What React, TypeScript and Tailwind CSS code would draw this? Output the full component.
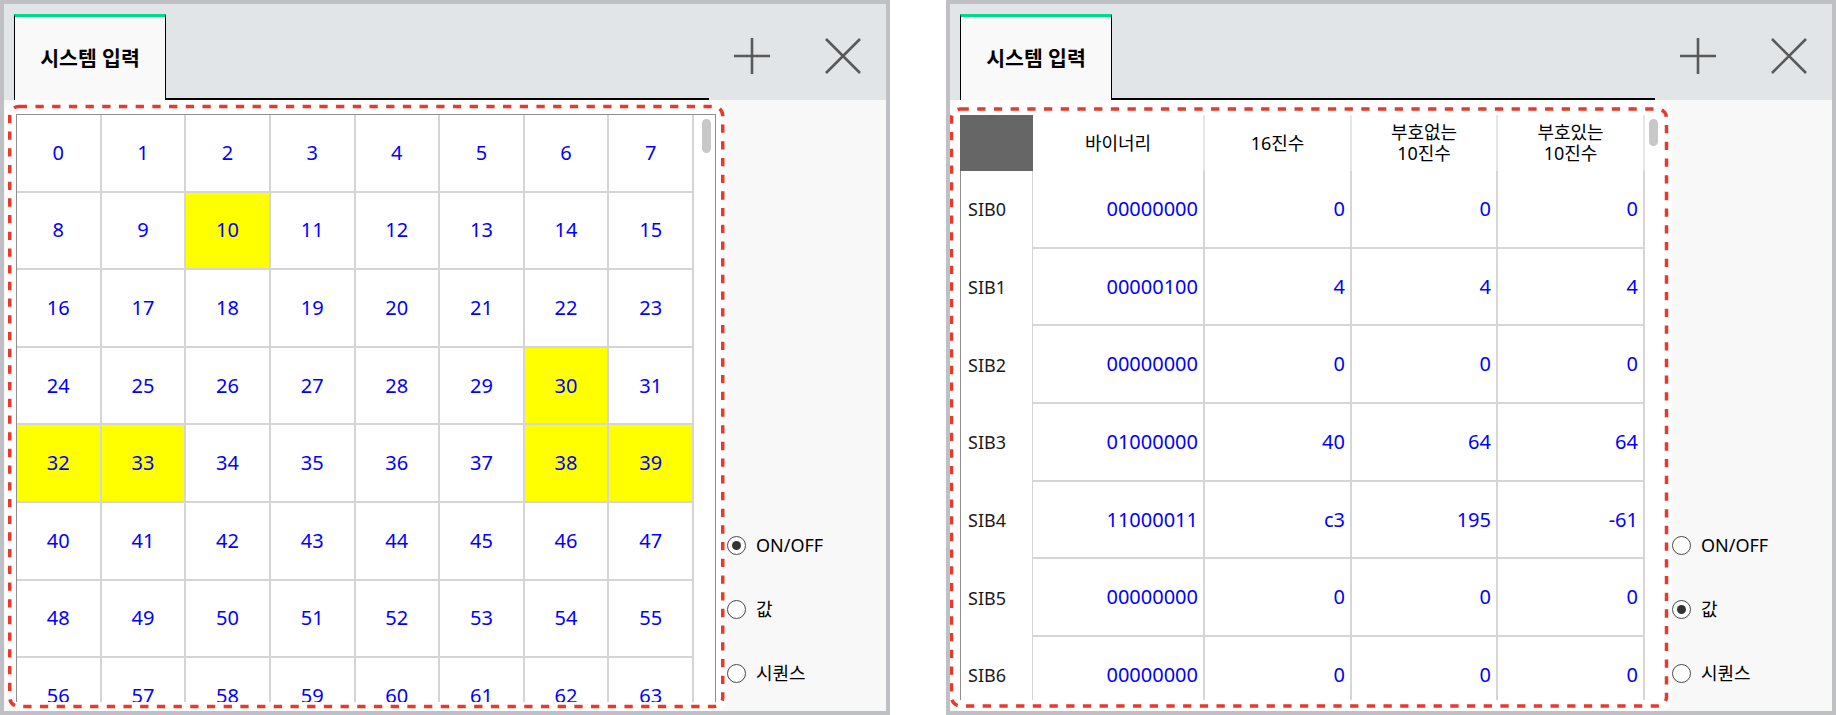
const highlighted = new Set([10, 30, 32, 33, 38, 39]);

const sibRows = [
  { name: 'SIB0', bin: '00000000', hex: '0', unsigned: '0', signed: '0' },
  { name: 'SIB1', bin: '00000100', hex: '4', unsigned: '4', signed: '4' },
  { name: 'SIB2', bin: '00000000', hex: '0', unsigned: '0', signed: '0' },
  { name: 'SIB3', bin: '01000000', hex: '40', unsigned: '64', signed: '64' },
  { name: 'SIB4', bin: '11000011', hex: 'c3', unsigned: '195', signed: '-61' },
  { name: 'SIB5', bin: '00000000', hex: '0', unsigned: '0', signed: '0' },
  { name: 'SIB6', bin: '00000000', hex: '0', unsigned: '0', signed: '0' },
];

const modes = ['ON/OFF', '값', '시퀀스'];

function PlusIcon() {
  return (
    <svg width="36" height="36" viewBox="0 0 36 36" fill="none" stroke="#595959" strokeWidth="2.6">
      <path d="M18 0v36M0 18h36" />
    </svg>
  );
}

function CloseIcon() {
  return (
    <svg width="36" height="36" viewBox="0 0 36 36" fill="none" stroke="#595959" strokeWidth="2.6">
      <path d="M1 1l34 34M35 1L1 35" />
    </svg>
  );
}

function TabBar() {
  return (
    <div className="h-[96px] shrink-0 bg-[#e1e5e8] flex items-end pl-[10px]">
      <div className="w-[152px] h-[86px] bg-[#f9f9f9] border-x border-black border-t-[3.5px] border-t-[#00d98c] flex items-center justify-center">
        <span className="text-[20.5px] font-bold text-black leading-none">시스템 입력</span>
      </div>
      <div className="w-[543px] h-[2px] bg-black" />
      <div className="self-stretch flex-1 flex items-center justify-center gap-[55px] pt-[8px]">
        <PlusIcon />
        <CloseIcon />
      </div>
    </div>
  );
}

type Box = { x: number; y: number; w: number; h: number };

// white halo with the red dashed marker drawn over the content
function Annotated({ className, box, children }: { className: string; box: Box; children: React.ReactNode }) {
  return (
    <div className={`relative h-full bg-white rounded-[12px] overflow-hidden ${className}`}>
      {children}
      <svg className="absolute inset-0 w-full h-full pointer-events-none">
        <rect
          x={box.x}
          y={box.y}
          width={box.w}
          height={box.h}
          rx="9"
          fill="none"
          stroke="#e8392c"
          strokeWidth="3.5"
          strokeDasharray="8.3 8.4"
        />
      </svg>
    </div>
  );
}

function ModeRadios({ selected }: { selected: number }) {
  return (
    <div className="flex flex-col gap-[42px] pt-[434px]">
      {modes.map((m, i) => (
        <div key={m} className="h-[22px] flex items-center gap-[10px]">
          <span className="w-[19px] h-[19px] rounded-full border-[1.5px] border-[#4a4a4a] bg-white flex items-center justify-center">
            {i === selected && <span className="w-[9px] h-[9px] rounded-full bg-[#333]" />}
          </span>
          <span className="text-[18px] leading-none text-black">{m}</span>
        </div>
      ))}
    </div>
  );
}

function Panel({ children }: { children: React.ReactNode }) {
  return (
    <div className="w-[890px] h-[715px] shrink-0 border-4 border-[#bfc0c4] flex flex-col bg-[#f8f8f8]">
      <TabBar />
      <div className="flex-1 min-h-0 flex">{children}</div>
    </div>
  );
}

function BitGrid() {
  return (
    <div className="pl-[11px] pt-[14px]">
      <div className="w-[700px] h-[588px] border-t border-x border-[#8e8e8e] flex overflow-hidden">
        <div className="w-[677px] grid grid-cols-8 content-start">
          {Array.from({ length: 64 }, (_, n) => (
            <div
              key={n}
              className={`h-[77.6px] border-r-2 border-b-2 border-[#d5d5d5] flex items-center justify-center text-[20px] text-[#0000ff] ${
                highlighted.has(n) ? 'bg-[#ffff00]' : 'bg-white'
              }`}
            >
              {n}
            </div>
          ))}
        </div>
        <div className="flex-1 bg-white pl-[8px] pt-[4px]">
          <div className="w-[9px] h-[34px] rounded-full bg-[#c8c8c8]" />
        </div>
      </div>
    </div>
  );
}

function ValueTable() {
  return (
    <div className="pl-[10px] pt-[15px]">
      <div className="w-[702px] h-[585px] flex overflow-hidden">
        <div className="w-[685px] grid grid-cols-[73px_172px_147px_146px_147px] content-start">
          <div className="h-[56px] bg-[#666666]" />
          <div className="h-[56px] border-r-2 border-[#e6e6e6] flex items-center justify-center text-[18px] text-black">바이너리</div>
          <div className="h-[56px] border-r-2 border-[#e6e6e6] flex items-center justify-center text-[18px] text-black">16진수</div>
          <div className="h-[56px] border-r-2 border-[#e6e6e6] flex items-center justify-center text-center text-[18px] leading-[21px] text-black">
            부호없는<br />10진수
          </div>
          <div className="h-[56px] border-r-2 border-[#e6e6e6] flex items-center justify-center text-center text-[18px] leading-[21px] text-black">
            부호있는<br />10진수
          </div>
          {sibRows.map(r => (
            <div key={r.name} className="contents">
              <div className="h-[77.7px] border-l border-l-[#8e8e8e] border-r border-r-[#d4d4d4] flex items-center pl-[7px] text-[18px] text-[#1a1a1a]">
                {r.name}
              </div>
              {[r.bin, r.hex, r.unsigned, r.signed].map((v, i) => (
                <div
                  key={i}
                  className="h-[77.7px] border-r-2 border-b-2 border-[#d6d6d6] flex items-center justify-end pr-[5px] text-[20px] text-[#0000ff]"
                >
                  {v}
                </div>
              ))}
            </div>
          ))}
        </div>
        <div className="flex-1 bg-white pl-[4px] pt-[4px]">
          <div className="w-[9px] h-[27px] rounded-full bg-[#c8c8c8]" />
        </div>
      </div>
    </div>
  );
}

export default function App() {
  return (
    <div className="w-[1836px] h-[715px] bg-white flex gap-[56px] font-['Noto_Sans','Noto_Sans_CJK_KR',sans-serif] overflow-hidden">
      <Panel>
        <Annotated className="ml-[1px] w-[722px]" box={{ x: 4.75, y: 6.5, w: 713, h: 600 }}>
          <BitGrid />
        </Annotated>
        <ModeRadios selected={0} />
      </Panel>
      <Panel>
        <Annotated className="w-[722px]" box={{ x: 1.5, y: 9, w: 715, h: 597 }}>
          <ValueTable />
        </Annotated>
        <ModeRadios selected={1} />
      </Panel>
    </div>
  );
}
